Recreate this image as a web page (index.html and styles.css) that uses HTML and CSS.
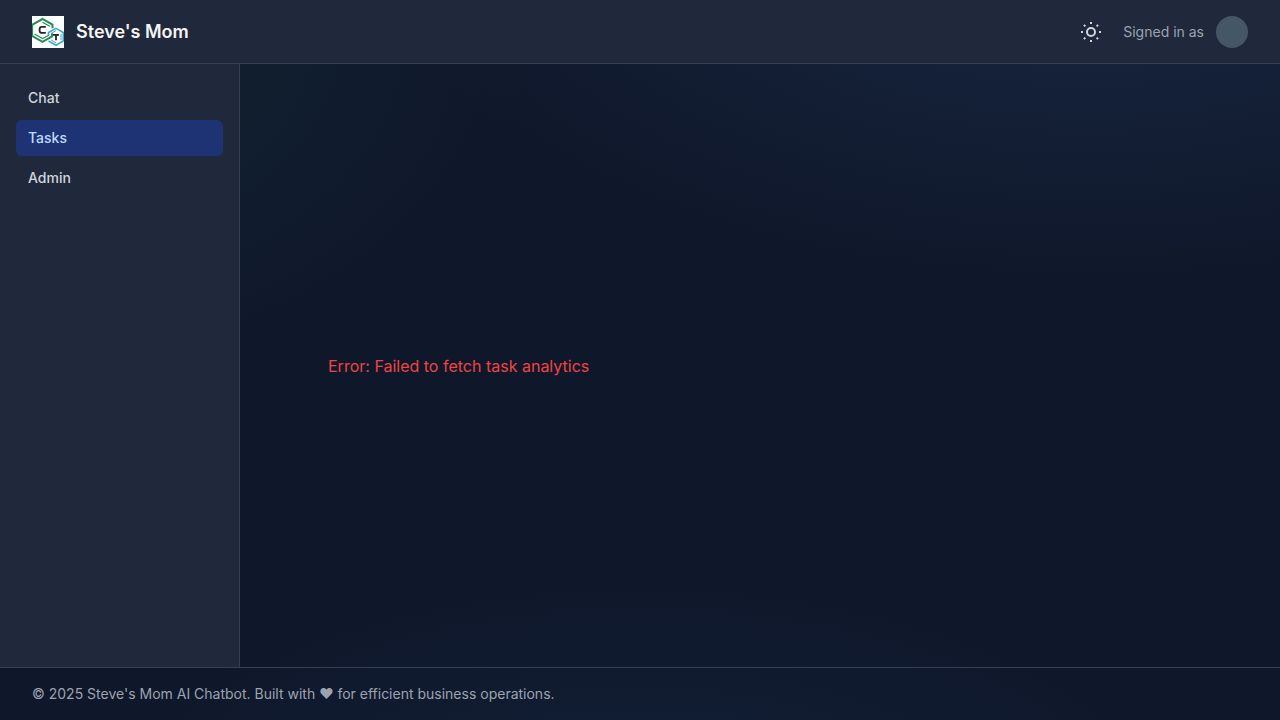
FILE: index.html
```html
<!DOCTYPE html>
<html lang="en">
<head>
<meta charset="utf-8">
<meta name="viewport" content="width=device-width, initial-scale=1">
<title>Steve's Mom</title>
<link rel="stylesheet" href="styles.css">
</head>
<body class="app">
<header class="header">
  <div class="brand">
    <svg class="logo" viewBox="0 0 32 32" aria-hidden="true">
      <rect width="32" height="32" fill="#fff"/>
      <g fill="none" stroke="#278a57">
        <path stroke-width="2" d="M0 8.800 10.500 3 20.500 8.700v3.500M0 19.800l10.500 6 9.500-5.500v-3"/>
        <path stroke-width="1.200" d="M10.500 6.200 17.800 10.300M.5 8.500v11.500M2.500 18l8 4.600M10.500 22.800l6.500-3.800"/>
      </g>
      <g fill="none" stroke="#3ca9d2">
        <path stroke-width="1.600" d="M16.500 19v-2.500L24 12.300l7.300 4.200v8.500L24 29.300l-7.500-4.300"/>
        <path stroke-width="1" d="M19 17.500l5-2.900M29 18v6.200M18.800 23.800l5.200 3"/>
      </g>
      <path d="M13.800 10.800H10q-2.400 0-2.400 2.300v1.600q0 2.200 2.400 2.200h3.800" fill="none" stroke="#222529" stroke-width="1.800"/>
      <path d="M21 18.800h6M24 18.800v5.500" fill="none" stroke="#222529" stroke-width="1.800"/>
    </svg>
    <h1 class="brand-name">Steve's Mom</h1>
  </div>
  <div class="account">
    <button class="theme-toggle" type="button" aria-label="Toggle theme">
      <svg class="sun" viewBox="0 0 24 24" aria-hidden="true">
        <circle cx="12" cy="12" r="4"/>
        <path d="M12 2v2M12 20v2M2 12h2M20 12h2M4.900 4.900l1.500 1.500M17.600 17.600l1.500 1.500M4.900 19.100l1.500-1.500M17.600 6.400l1.500-1.500"/>
      </svg>
    </button>
    <div class="user">
      <span class="signed">Signed in as</span>
      <span class="avatar"></span>
    </div>
  </div>
</header>
<div class="body">
  <nav class="sidebar" aria-label="Main">
    <a class="nav-link" href="#chat">Chat</a>
    <a class="nav-link nav-link-active" href="#tasks" aria-current="page">Tasks</a>
    <a class="nav-link" href="#admin">Admin</a>
  </nav>
  <main class="main">
    <p class="error" role="alert">Error: Failed to fetch task analytics</p>
  </main>
</div>
<footer class="footer">© 2025 Steve's Mom AI Chatbot. Built with ❤ for efficient business operations.</footer>
</body>
</html>
```
FILE: styles.css
```css
* {
  box-sizing: border-box;
}

.app {
  margin: 0;
  min-height: 100vh;
  display: flex;
  flex-direction: column;
  font-family: Inter, "Liberation Sans", sans-serif;
  font-size: 16px;
  line-height: 24px;
  color: #f3f4f6;
  background:
    radial-gradient(1200px 600px at 85% -10%, rgba(96, 165, 250, 0.12), transparent 60%),
    radial-gradient(900px 600px at 0% 5%, rgba(52, 211, 153, 0.08), transparent 60%),
    radial-gradient(1000px 500px at 50% 120%, rgba(56, 160, 246, 0.08), transparent 60%),
    #0f172a;
}

.header {
  display: flex;
  align-items: center;
  justify-content: space-between;
  padding: 0 32px;
  height: 64px;
  background: #1f293b;
  border-bottom: 1px solid #334155;
}

.brand {
  display: flex;
  align-items: center;
  gap: 12px;
}

.logo {
  width: 32px;
  height: 32px;
}

.brand-name {
  margin: 0;
  font-size: 18px;
  line-height: 28px;
  font-weight: 600;
}

.account {
  display: flex;
  align-items: center;
  gap: 12px;
}

.theme-toggle {
  display: flex;
  padding: 8px;
  border: 0;
  border-radius: 6px;
  background: transparent;
  color: #d1d5db;
}

.sun {
  width: 24px;
  height: 24px;
  fill: none;
  stroke: currentColor;
  stroke-width: 2;
}

.user {
  display: flex;
  align-items: center;
  gap: 12px;
}

.signed {
  font-size: 14px;
  line-height: 20px;
  color: #9ca3af;
}

.avatar {
  width: 32px;
  height: 32px;
  border-radius: 50%;
  background: #475569;
}

.body {
  flex: 1;
  display: flex;
}

.sidebar {
  width: 240px;
  flex-shrink: 0;
  display: flex;
  flex-direction: column;
  gap: 4px;
  padding: 16px;
  background: #1f293b;
  border-right: 1px solid #334155;
}

.nav-link {
  padding: 8px 12px;
  border-radius: 6px;
  font-size: 14px;
  line-height: 20px;
  font-weight: 500;
  color: #d1d5db;
  text-decoration: none;
}

.nav-link-active {
  background: #1e3374;
  color: #bfdbfe;
}

.main {
  flex: 1;
  display: flex;
  align-items: center;
  padding: 32px 88px;
}

.error {
  margin: 0;
  color: #ef4444;
}

.footer {
  padding: 16px 32px;
  border-top: 1px solid #334155;
  font-size: 14px;
  line-height: 20px;
  color: #9ca3af;
}
```
